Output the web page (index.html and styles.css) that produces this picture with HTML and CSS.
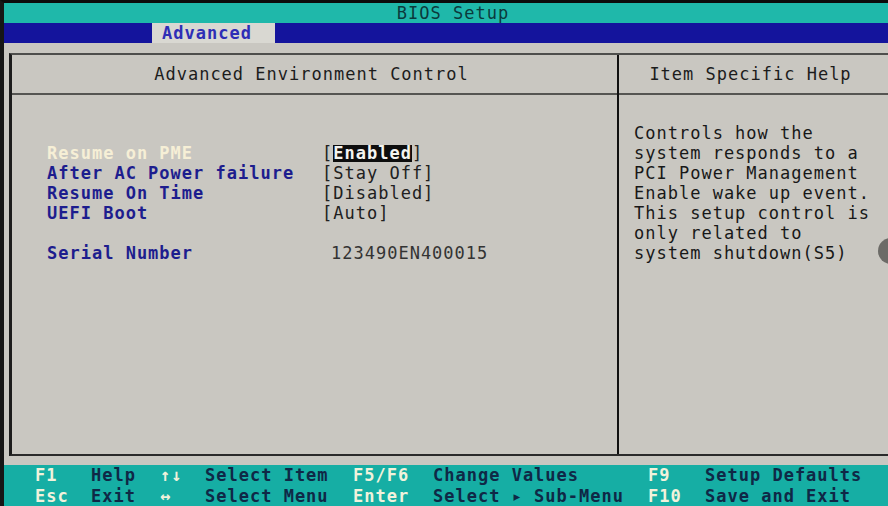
FILE: index.html
```html
<!DOCTYPE html>
<html lang="en">
<head>
  <meta charset="UTF-8" />
  <meta name="viewport" content="width=device-width, initial-scale=1.0" />
  <title>BIOS Setup</title>
  <link rel="stylesheet" href="styles.css">
</head>
<body>
  <div class="screen">
    <header class="titlebar">BIOS Setup</header>
    <nav class="menubar">
      <span class="tab">Advanced</span>
    </nav>

    <div class="main">
      <div class="frame">
        <div class="panel">
          <div class="panel-head">Advanced Environment Control</div>
          <div class="items">
            <div class="row active">
              <span class="label">Resume on PME</span>
              <span class="value">[<span class="sel">Enabled</span>]</span>
            </div>
            <div class="row">
              <span class="label">After AC Power failure</span>
              <span class="value">[Stay Off]</span>
            </div>
            <div class="row">
              <span class="label">Resume On Time</span>
              <span class="value">[Disabled]</span>
            </div>
            <div class="row">
              <span class="label">UEFI Boot</span>
              <span class="value">[Auto]</span>
            </div>
            <div class="row spaced">
              <span class="label">Serial Number</span>
              <span class="value info">123490EN400015</span>
            </div>
          </div>
        </div>

        <div class="panel help">
          <div class="panel-head">Item Specific Help</div>
          <div class="help-text">
            <div>Controls how the</div>
            <div>system responds to a</div>
            <div>PCI Power Management</div>
            <div>Enable wake up event.</div>
            <div>This setup control is</div>
            <div>only related to</div>
            <div>system shutdown(S5)</div>
          </div>
        </div>
      </div>
    </div>

    <footer class="keys">
      <span class="key">F1</span><span>Help</span><span class="key">↑↓</span><span>Select Item</span><span class="key">F5/F6</span><span>Change Values</span><span class="key">F9</span><span>Setup Defaults</span>
      <span class="key">Esc</span><span>Exit</span><span class="key">↔</span><span>Select Menu</span><span class="key">Enter</span><span>Select ▸ Sub-Menu</span><span class="key">F10</span><span>Save and Exit</span>
    </footer>
  </div>
</body>
</html>
```

FILE: styles.css
```css
* {
  box-sizing: border-box;
  margin: 0;
  padding: 0;
}
body {
  font-family: 'DejaVu Sans Mono', 'Liberation Mono', monospace;
  font-weight: bold;
  font-size: 17px;
  letter-spacing: 1px;
  line-height: 20px;
  background: #0c0c0c;
  color: #1e1e1e;
  width: 888px;
  height: 506px;
  overflow: hidden;
}
.screen {
  height: 506px;
  border-top: 3px solid #0c0c0c;
  border-left: 4px solid #161616;
  display: flex;
  flex-direction: column;
}
.titlebar {
  height: 20px;
  background: #1fb8aa;
  color: #0b3a3c;
  text-align: center;
  font-weight: normal;
  padding-left: 14px;
}
.menubar {
  height: 20px;
  background: #14149c;
  padding-left: 148px;
}
.tab {
  display: inline-block;
  width: 123px;
  height: 20px;
  padding-left: 10px;
  background: #d9d8d2;
  color: #2e2eb6;
}
.main {
  height: 422px;
  background: #c9c7c1;
  padding: 10px 0 9px 5px;
}
.frame {
  height: 403px;
  display: grid;
  grid-template-columns: 605px 1fr;
  border-top: 2px solid #4e4e4c;
  border-bottom: 2px solid #2a2a2a;
  border-left: 3px solid #1c1c1c;
}
.panel {
  display: flex;
  flex-direction: column;
}
.panel-head {
  height: 40px;
  line-height: 38px;
  text-align: center;
  border-bottom: 2px solid #555552;
  font-weight: normal;
  color: #1c1c1c;
  padding-right: 6px;
}
.items {
  padding: 48px 0 0 35px;
}
.row {
  display: flex;
  height: 20px;
}
.row.spaced {
  margin-top: 20px;
}
.label {
  width: 275px;
  color: #1d1d8e;
}
.row.active .label {
  color: #f6efd6;
}
.value {
  color: #202020;
  font-weight: normal;
}
.value.info {
  padding-left: 9px;
  color: #333;
}
.sel {
  display: inline-block;
  height: 17px;
  line-height: 17px;
  vertical-align: top;
  margin-top: 2px;
  background: #0e0e0e;
  color: #f4f4f0;
  font-weight: bold;
}
.help {
  position: relative;
  border-left: 2px solid #101010;
}
.help-text {
  padding: 28px 0 0 15px;
  font-weight: normal;
  color: #181818;
}
.help::after {
  content: '';
  position: absolute;
  right: -16px;
  top: 183px;
  width: 26px;
  height: 26px;
  border-radius: 50%;
  background: #6c6b67;
}
.keys {
  height: 41px;
  background: #16aea4;
  color: #0f2846;
  display: grid;
  grid-template-columns: 56px 69px 45px 148px 80px 215px 57px 1fr;
  padding-left: 31px;
}
.key {
  color: #f2f2dc;
}
```
